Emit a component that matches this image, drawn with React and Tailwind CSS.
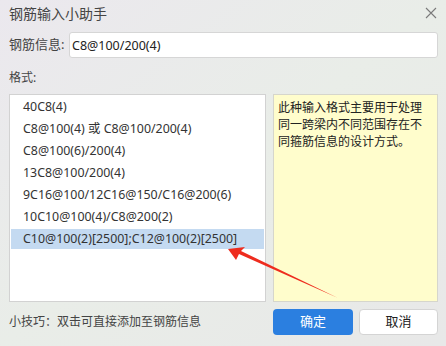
import React, { useState } from "react";

const formats = [
  "40C8(4)",
  "C8@100(4) 或 C8@100/200(4)",
  "C8@100(6)/200(4)",
  "13C8@100/200(4)",
  "9C16@100/12C16@150/C16@200(6)",
  "10C10@100(4)/C8@200(2)",
  "C10@100(2)[2500];C12@100(2)[2500]",
];

const font = { fontFamily: '"Noto Sans", "Noto Sans CJK SC", sans-serif' };

const App = () => {
  const [value, setValue] = useState("C8@100/200(4)");
  const [selected, setSelected] = useState(6);

  return (
    <div
      className="relative w-[446px] h-[346px] overflow-hidden bg-linear-to-br from-[#ebe8ee] via-[#e9ede8] to-[#e8e8e8] text-[#333] flex flex-col pl-[9px] pr-[8px]"
      style={font}
    >
      {/* title bar */}
      <div className="h-[26px] flex items-center justify-between">
        <span className="text-[14px] text-[#444]">钢筋输入小助手</span>
        <svg width="12" height="12" viewBox="0 0 12 12" className="mr-[1px]">
          <path d="M1 1L11 11M11 1L1 11" stroke="#7a7a7a" strokeWidth="1.1" />
        </svg>
      </div>

      {/* input */}
      <div className="mt-[6px] h-[26px] flex items-center">
        <label className="w-[60px] text-[13px] text-[#444]">钢筋信息:</label>
        <input
          value={value}
          onChange={(e) => setValue(e.target.value)}
          className="flex-1 h-full bg-white border border-[#d6d6d6] rounded-[3px] px-[2px] text-[12.5px] text-[#222] outline-none"
        />
      </div>

      <div className="mt-[12px] h-[16px] flex items-center text-[12px] text-[#444]">格式:</div>

      {/* list + description */}
      <div className="mt-[8px] h-[208px] flex gap-[7px]">
        <div className="w-[257px] h-full bg-white border border-[#d2d2d2] p-[1px]">
          <div className="flex flex-col gap-[2px] pt-[1px]">
            {formats.map((f, i) => (
              <div
                key={i}
                onClick={() => setSelected(i)}
                onDoubleClick={() => setValue(f)}
                className={`h-[20px] flex items-center pl-[12px] text-[12.4px] whitespace-nowrap ${
                  selected === i ? "bg-[#c4daf1]" : ""
                }`}
              >
                {f}
              </div>
            ))}
          </div>
        </div>
        <div className="flex-1 h-full bg-[#fffdcc] border border-[#d6d6cc] px-[4px] pt-[4px] text-[12px] leading-[17px] text-[#222]">
          此种输入格式主要用于处理同一跨梁内不同范围存在不同箍筋信息的设计方式。
        </div>
      </div>

      {/* bottom */}
      <div className="mt-[7px] h-[26px] flex items-center">
        <span className="flex-1 text-[12px] text-[#444]">小技巧：双击可直接添加至钢筋信息</span>
        <div className="flex gap-[6px]">
          <button className="w-[80px] h-[26px] rounded-[4px] bg-[#2b7fe0] text-white text-[13px]">
            确定
          </button>
          <button className="w-[79px] h-[26px] rounded-[4px] bg-white border border-[#d4d4d4] text-[#222] text-[13px]">
            取消
          </button>
        </div>
      </div>

      {/* annotation arrow */}
      <svg
        className="absolute left-0 top-0 pointer-events-none"
        width="446"
        height="346"
        viewBox="0 0 446 346"
      >
        <polygon
          points="228,249 245,247 241,251 338,298 239,254 236,260"
          fill="#ee2c1e"
        />
      </svg>
    </div>
  );
};

export default App;
